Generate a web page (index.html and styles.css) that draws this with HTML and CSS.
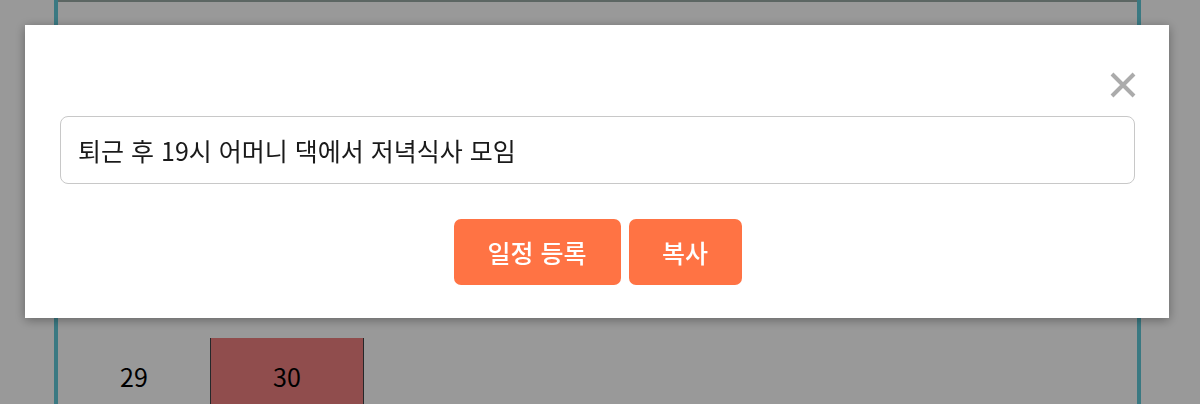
FILE: index.html
```html
<!DOCTYPE html>
<html lang="ko">
<head>
<meta charset="utf-8">
<title>일정 등록</title>
<link rel="stylesheet" href="styles.css">
</head>
<body>
<div class="calendar">
  <div class="week week-top">
    <div class="day"></div><div class="day"></div><div class="day"></div><div class="day"></div><div class="day"></div><div class="day"></div><div class="day"></div>
  </div>
  <div class="week week-hidden">
    <div class="day"></div><div class="day"></div><div class="day"></div><div class="day"></div><div class="day"></div><div class="day"></div><div class="day"></div>
  </div>
  <div class="week week-last">
    <div class="day plain">29</div>
    <div class="day today">30</div>
  </div>
</div>

<div class="backdrop"></div>

<div class="modal">
  <div class="modal-head">
    <button class="close" aria-label="닫기">
      <svg width="26" height="26" viewBox="0 0 26 26"><path d="M2 2 L24 24 M24 2 L2 24" stroke="#ababab" stroke-width="4" stroke-linecap="butt" fill="none"/></svg>
    </button>
  </div>
  <div class="field">퇴근 후 19시 어머니 댁에서 저녁식사 모임</div>
  <div class="actions">
    <button class="btn btn-wide">일정 등록</button>
    <button class="btn btn-narrow">복사</button>
  </div>
</div>
</body>
</html>
```

FILE: styles.css
```css
html, body {
  margin: 0;
  padding: 0;
  height: 100%;
  overflow: hidden;
}
body {
  background: #ffffff;
  font-family: "Noto Sans CJK KR", "Noto Sans", sans-serif;
}

.calendar {
  margin-left: 54px;
  width: 1079px;
  border-left: 4px solid #62cad9;
  border-right: 4px solid #62cad9;
  height: 404px;
}
.week {
  display: grid;
  grid-template-columns: 152px repeat(6, 154px);
}
.week-top {
  height: 24px;
  border-top: 2px solid #9aaba6;
  box-sizing: border-box;
}
.week-hidden {
  height: 314px;
}
.week-last {
  height: 80px;
}
.day {
  display: flex;
  align-items: center;
  justify-content: center;
  font-size: 25px;
  color: #000;
  padding-bottom: 4px;
}
.today {
  background: #f08080;
  border-left: 1px solid #3e4347;
  border-right: 1px solid #3e4347;
}

.backdrop {
  position: fixed;
  inset: 0;
  background: rgba(0, 0, 0, 0.4);
}

.modal {
  position: fixed;
  left: 25px;
  top: 25px;
  width: 1144px;
  height: 293px;
  box-sizing: border-box;
  background: #fff;
  padding: 47px 34px 33px 35px;
  box-shadow: 0 2px 10px rgba(0, 0, 0, 0.35);
  display: flex;
  flex-direction: column;
}
.modal-head {
  display: flex;
  justify-content: flex-end;
  height: 26px;
}
.close {
  border: none;
  background: none;
  padding: 0;
  margin-right: -1px;
  width: 26px;
  height: 26px;
  display: block;
}
.close svg { display: block; }

.field {
  margin-top: 18px;
  height: 68px;
  box-sizing: border-box;
  border: 1px solid #c8c8c8;
  border-radius: 8px;
  padding: 0 17px;
  display: flex;
  align-items: center;
  font-size: 25px;
  color: #1a1a1a;
}

.actions {
  margin-top: 35px;
  display: flex;
  justify-content: center;
  gap: 8px;
}
.btn {
  height: 66px;
  border: none;
  border-radius: 7px;
  background: #ff7344;
  color: #fff;
  font-family: "Noto Sans CJK KR", "Noto Sans", sans-serif;
  font-size: 25px;
  font-weight: 500;
  padding: 0;
}
.btn-wide { width: 167px; }
.btn-narrow { width: 113px; }
```
